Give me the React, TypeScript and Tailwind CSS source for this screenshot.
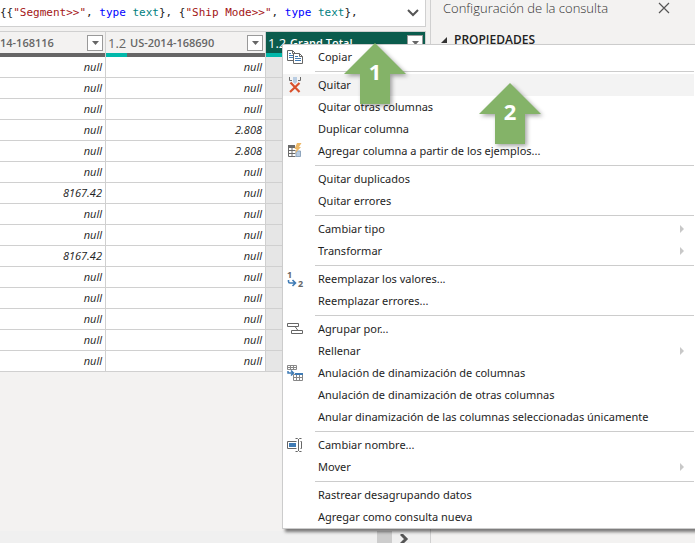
import { Fragment, type ReactNode } from "react";

const SANS = "font-['Open_Sans','Noto_Sans',sans-serif]";

function CopyIcon() {
  return (
    <svg width="16" height="16" viewBox="0 0 16 16" fill="#fff" stroke="#666" aria-hidden="true">
      <path d="M.5 1.500h5l3 3v7h-8z" />
      <path d="M5.500 1.500v3h3" fill="none" />
      <path d="M2 4.500h2M2 6.500h4M2 8.500h4" stroke="#3f7bb5" />
      <path d="M6.500 4.500h6l3 3v7h-9z" />
      <path d="M12.500 4.500v3h3" fill="none" />
      <path d="M8 7.500h3M8 9.500h6M8 11.500h6" stroke="#3f7bb5" />
    </svg>
  );
}

function RemoveIcon() {
  return (
    <svg width="16" height="16" viewBox="0 0 16 16" fill="none" aria-hidden="true">
      <path d="M6 0h4v5L8 7 6 5z" fill="#b9cde3" />
      <path d="M2.500 0v3.500h2.500M13.500 0v3.500H11" stroke="#6b6b6b" />
      <path d="M3.500 5.500l9 9.500M12.500 6L3 15" stroke="#d9512c" strokeWidth="2.200" />
    </svg>
  );
}

function ExampleColumnIcon() {
  return (
    <svg width="16" height="16" viewBox="0 0 16 16" fill="none" aria-hidden="true">
      <path d="M1 2h7v3H1z" fill="#6b6b6b" />
      <path d="M1.500 3.500v10h7M1.500 7.500h7M1.500 10.500h7M5 5v8.500" stroke="#6b6b6b" />
      <path d="M9 8h4.500v5.500H9z" fill="#b9cde3" stroke="#8fa5bd" />
      <path d="M10 0h4.500l-2.500 4H14L8 10.500l1.500-4.500H7.500z" fill="#edb867" />
    </svg>
  );
}

function ReplaceIcon() {
  return (
    <svg width="18" height="22" viewBox="0 0 18 22" fill="none" className="overflow-visible" aria-hidden="true">
      <text x="0" y="10" fontSize="9" fontWeight="700" fill="#666">1</text>
      <text x="11" y="19" fontSize="9" fontWeight="700" fill="#666">2</text>
      <path d="M1.500 12v1.500q0 1.500 1.500 1.500h5M5.500 12l3 3-3 3" stroke="#3f7bb5" strokeWidth="1.600" />
    </svg>
  );
}

function GroupIcon() {
  return (
    <svg width="16" height="16" viewBox="0 0 16 16" fill="none" stroke="#666" aria-hidden="true">
      <path d="M.5 2.500h11v3H.5zM4.500 9.500h11v3h-11zM8 5.500l3 4" />
    </svg>
  );
}

function UnpivotIcon() {
  return (
    <svg width="16" height="16" viewBox="0 0 16 16" fill="none" aria-hidden="true">
      <path d="M.5 .5h9v4H.5zM.5 2.500h9M3.500 0v4.500M6.500 0v4.500" stroke="#888" />
      <path d="M1 6v2h4.500M4 5.500l2.500 2.500L4 10.500" stroke="#3f7bb5" strokeWidth="1.500" />
      <path d="M6.500 9.500h9v6h-9zM6.500 12.500h9M9.500 10v5.500M12.500 10v5.500" stroke="#888" />
      <path d="M8 8h8v2H8z" fill="#3f7bb5" />
    </svg>
  );
}

function RenameIcon() {
  return (
    <svg width="16" height="16" viewBox="0 0 16 16" fill="none" aria-hidden="true">
      <path d="M9.500 4.500h-9v7h9M13.500 4.500h1v7h-1" stroke="#666" />
      <path d="M2 6h7v4H2z" fill="#3f7bb5" />
      <path d="M8.500 1.500h2l1 1 1-1h2M8.500 14.500h2l1-1 1 1h2M11.500 2v12" stroke="#666" />
    </svg>
  );
}

type Item = { label: string; icon?: ReactNode; submenu?: boolean; active?: boolean };

const groups: Item[][] = [
  [{ label: "Copiar", icon: <CopyIcon /> }],
  [
    { label: "Quitar", icon: <RemoveIcon />, active: true },
    { label: "Quitar otras columnas" },
    { label: "Duplicar columna" },
    { label: "Agregar columna a partir de los ejemplos...", icon: <ExampleColumnIcon /> },
  ],
  [{ label: "Quitar duplicados" }, { label: "Quitar errores" }],
  [
    { label: "Cambiar tipo", submenu: true },
    { label: "Transformar", submenu: true },
  ],
  [{ label: "Reemplazar los valores...", icon: <ReplaceIcon /> }, { label: "Reemplazar errores..." }],
  [
    { label: "Agrupar por...", icon: <GroupIcon /> },
    { label: "Rellenar", submenu: true },
    { label: "Anulación de dinamización de columnas", icon: <UnpivotIcon /> },
    { label: "Anulación de dinamización de otras columnas" },
    { label: "Anular dinamización de las columnas seleccionadas únicamente" },
  ],
  [
    { label: "Cambiar nombre...", icon: <RenameIcon /> },
    { label: "Mover", submenu: true },
  ],
  [{ label: "Rastrear desagrupando datos" }, { label: "Agregar como consulta nueva" }],
];

const rows: [string, string][] = [
  ["null", "null"],
  ["null", "null"],
  ["null", "null"],
  ["null", "2.808"],
  ["null", "2.808"],
  ["null", "null"],
  ["8167.42", "null"],
  ["null", "null"],
  ["null", "null"],
  ["8167.42", "null"],
  ["null", "null"],
  ["null", "null"],
  ["null", "null"],
  ["null", "null"],
  ["null", "null"],
];

function FilterButton({ label }: { label: string }) {
  return (
    <button type="button" aria-label={label} className="flex size-4 shrink-0 items-center justify-center border border-[#999] bg-white">
      <svg width="7" height="4" viewBox="0 0 7 4" aria-hidden="true">
        <path d="M0 0h7L3.500 4z" fill="#666" />
      </svg>
    </button>
  );
}

function ColumnHeader({ name, selected = false, typed = true }: { name: string; selected?: boolean; typed?: boolean }) {
  return (
    <th scope="col" className="border-t border-r border-[#d0d0d0] p-0 text-left font-normal">
      <div className={`flex h-[21px] items-center pr-[2px] ${selected ? "bg-[#0b5c4d] text-white" : "bg-[#f3f2f1] text-[#666]"}`}>
        {typed && <span className="w-6 shrink-0 pl-[2px] text-[13px] leading-4">1.2</span>}
        <span className="flex-1 truncate text-[11px] leading-4 font-semibold">{name}</span>
        <FilterButton label={`Filtrar ${name}`} />
      </div>
      <div className="h-1 bg-[#666]">
        <div className={`h-1 bg-[#01b8aa] ${typed ? (selected ? "w-full" : "w-[21px]") : "w-0"}`} />
      </div>
    </th>
  );
}

function FormulaBar() {
  return (
    <div className="mr-[4px] flex h-[27px] items-center border-r border-b border-[#d0d0d0] bg-white">
      <code className="flex-1 truncate font-['DejaVu_Sans_Mono',monospace] text-[11px] leading-4 whitespace-pre text-[#222]">
        {"{{"}
        <span className="text-[#a31515]">"Segment&gt;&gt;"</span>
        {", "}
        <span className="text-[#0000ff]">type</span> <span className="text-[#008080]">text</span>
        {"}, {"}
        <span className="text-[#a31515]">"Ship Mode&gt;&gt;"</span>
        {", "}
        <span className="text-[#0000ff]">type</span> <span className="text-[#008080]">text</span>
        {"},"}
      </code>
      <button type="button" aria-label="Expandir la barra de fórmulas" className="px-[6px]">
        <svg width="12" height="8" viewBox="0 0 12 8" fill="none" stroke="#555" strokeWidth="2" aria-hidden="true">
          <path d="M1 1l5 5 5-5" />
        </svg>
      </button>
    </div>
  );
}

function DataTable() {
  return (
    <table className="mt-1 w-[426px] table-fixed border-separate border-spacing-0">
      <colgroup>
        <col className="w-[106px]" />
        <col className="w-[160px]" />
        <col className="w-[160px]" />
      </colgroup>
      <thead>
        <tr>
          <ColumnHeader name="14-168116" typed={false} />
          <ColumnHeader name="US-2014-168690" />
          <ColumnHeader name="Grand Total" selected />
        </tr>
      </thead>
      <tbody className="text-right text-[11px] leading-5 text-[#222] italic">
        {rows.map(([a, b], i) => (
          <tr key={i}>
            <td className="border-r border-b border-[#d0d0d0] bg-white p-0 pr-[3px]">{a}</td>
            <td className="border-r border-b border-[#d0d0d0] bg-white p-0 pr-[3px]">{b}</td>
            <td className="border-r border-b border-[#d0d0d0] bg-[#e6e6e6] p-0" />
          </tr>
        ))}
      </tbody>
    </table>
  );
}

function ContextMenu() {
  return (
    <div role="menu" className="absolute top-[44px] -right-1 left-[282px] border border-[#ccc] bg-white pt-px pr-1 shadow-[3px_3px_3px_rgba(0,0,0,0.5)]">
      {groups.map((items, g) => (
        <Fragment key={g}>
          {g > 0 && <hr className="my-[2px] ml-8 h-[2px] border-0 border-t border-b border-t-white border-b-[#ccc]" />}
          {items.map((item) => (
            <button
              key={item.label}
              type="button"
              role="menuitem"
              className={`flex h-[22px] w-full items-center pl-1 text-left font-['Noto_Sans','Open_Sans',sans-serif] text-[11px] leading-4 text-[#1e1e1e] ${item.active ? "bg-[#f3f3f3]" : ""}`}
            >
              <span className="w-[31px] shrink-0">{item.icon}</span>
              <span className="flex-1 whitespace-nowrap">{item.label}</span>
              {item.submenu && (
                <svg width="4" height="8" viewBox="0 0 4 8" className="mr-[10px]" aria-hidden="true">
                  <path d="M0 0l4 4-4 4z" fill="#c8c8c8" />
                </svg>
              )}
            </button>
          ))}
        </Fragment>
      ))}
    </div>
  );
}

function StepArrow({ step, place }: { step: number; place: string }) {
  return (
    <div className={`absolute size-[62px] ${place}`}>
      <svg width="62" height="62" viewBox="0 0 62 62" className="absolute inset-0 overflow-visible drop-shadow-[2px_2px_2px_rgba(0,0,0,0.35)]" aria-hidden="true">
        <path d="M31 0l31 31H46v30H16V31H0z" fill="#84b368" />
      </svg>
      <span className="relative block pt-[14px] text-center text-[22px] leading-7 font-bold text-white">{step}</span>
    </div>
  );
}

export default function App() {
  return (
    <div className={`relative flex h-screen overflow-hidden bg-[#f3f2f1] ${SANS}`}>
      <main className="flex min-w-0 flex-1 flex-col">
        <FormulaBar />
        <DataTable />
        <div className="mt-auto flex h-3 bg-[#f0f0f0]">
          <div className="flex-1" />
          <div className="w-[15px] bg-[#cdcdcd]" />
          <button type="button" aria-label="Desplazar a la derecha" className="flex w-[38px] justify-start pt-[3px] pl-2">
            <svg width="10" height="10" viewBox="0 0 10 10" fill="none" stroke="#555" strokeWidth="3" aria-hidden="true">
              <path d="M1 0l5 5-5 5" />
            </svg>
          </button>
        </div>
      </main>
      <aside className="w-[265px] shrink-0 border-l border-[#d0d0d0]">
        <div className="flex items-center justify-between pr-[25px] pl-3">
          <h2 className="text-[13px] leading-4 font-light text-[#333]">Configuración de la consulta</h2>
          <button type="button" aria-label="Cerrar">
            <svg width="12" height="12" viewBox="0 0 12 12" stroke="#555" strokeWidth="1.200" aria-hidden="true">
              <path d="M1 1l10 10M11 1L1 11" />
            </svg>
          </button>
        </div>
        <h3 className="mt-4 flex items-center gap-[7px] pl-[10px] text-[12px] leading-4 font-semibold text-[#222]">
          <svg width="6" height="6" viewBox="0 0 6 6" aria-hidden="true">
            <path d="M6 0v6H0z" fill="#333" />
          </svg>
          PROPIEDADES
        </h3>
      </aside>
      <ContextMenu />
      <StepArrow step={1} place="top-[43px] left-[344px]" />
      <StepArrow step={2} place="top-[83px] left-[479px]" />
    </div>
  );
}
